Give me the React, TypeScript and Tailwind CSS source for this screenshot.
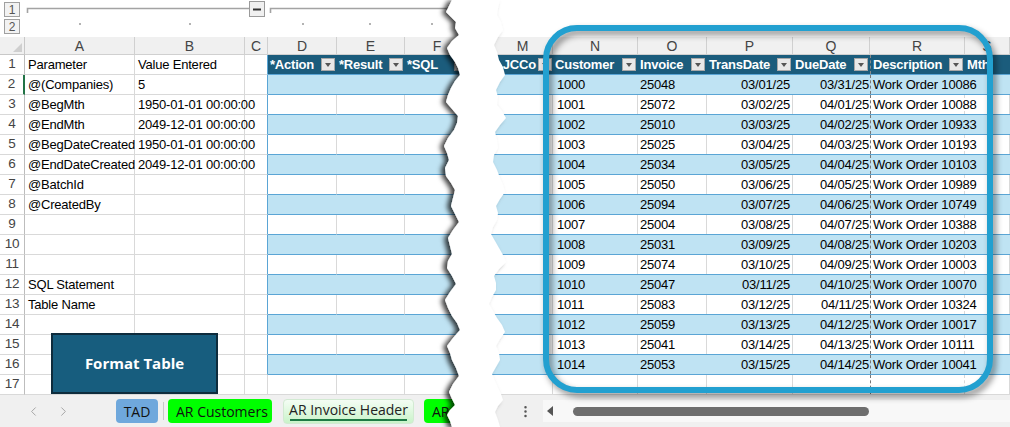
import { ChevronLeft, ChevronRight, EllipsisVertical } from 'lucide-react';

const params: Record<number, string> = {
  1: 'Parameter',
  2: '@(Companies)',
  3: '@BegMth',
  4: '@EndMth',
  5: '@BegDateCreated',
  6: '@EndDateCreated',
  7: '@BatchId',
  8: '@CreatedBy',
  12: 'SQL Statement',
  13: 'Table Name',
};

const values: Record<number, string> = {
  1: 'Value Entered',
  2: '5',
  3: '1950-01-01 00:00:00',
  4: '2049-12-01 00:00:00',
  5: '1950-01-01 00:00:00',
  6: '2049-12-01 00:00:00',
};

const invoices: [string, string, string][] = [
  ['1000', '25048', '10086'],
  ['1001', '25072', '10088'],
  ['1002', '25010', '10933'],
  ['1003', '25025', '10193'],
  ['1004', '25034', '10103'],
  ['1005', '25050', '10989'],
  ['1006', '25094', '10749'],
  ['1007', '25004', '10388'],
  ['1008', '25031', '10203'],
  ['1009', '25074', '10003'],
  ['1010', '25047', '10070'],
  ['1011', '25083', '10324'],
  ['1012', '25059', '10017'],
  ['1013', '25041', '10111'],
  ['1014', '25053', '10041'],
];

const rows = Array.from({ length: 17 }, (_, i) => i + 1);

const HEAD = 'bg-[#1b5c7c]';
const BAND = 'bg-[#bfe3f3]';

function Drop() {
  return (
    <span className="shrink-0 w-[14px] h-[13px] bg-[#e8e8e8] border border-[#a8a8a8] flex items-center justify-center">
      <span className="border-x-[3.5px] border-x-transparent border-t-[4px] border-t-[#555]" />
    </span>
  );
}

function HeadCell({ label, w }: { label: string; w: string }) {
  return (
    <div className={`${w} shrink-0 h-full flex items-center justify-between pl-[2px] pr-[2px] text-white font-bold overflow-hidden`}>
      <span className="whitespace-nowrap">{label}</span>
      <Drop />
    </div>
  );
}

function LeftRow({ n }: { n: number }) {
  const inTable = n >= 2 && n <= 16;
  const band = inTable && n % 2 === 0;
  const cell = 'shrink-0 h-full border-r border-b border-[#d9d9d9] pl-[3px] flex items-center whitespace-nowrap';
  const tCell = band
    ? `shrink-0 h-full ${BAND} border-b border-b-[#5aa5d5]`
    : inTable
      ? 'shrink-0 h-full border-r border-r-[#d9d9d9] border-b border-b-[#5aa5d5]'
      : 'shrink-0 h-full border-r border-b border-[#d9d9d9]';

  return (
    <div className="flex h-[20px]">
      <div
        className={`w-[25px] shrink-0 h-full border-b border-b-[#d9d9d9] flex items-center justify-center text-[13.5px] text-[#444] ${
          n === 2 ? 'border-r-2 border-r-[#217346]' : 'border-r border-r-[#bdbdbd]'
        }`}
      >
        {n}
      </div>
      <div className={`${cell} w-[110px]`}>{params[n]}</div>
      <div className={`${cell} w-[110px]`}>{values[n]}</div>
      <div
        className={`shrink-0 h-full w-[23px] border-b border-b-[#d9d9d9] border-r ${
          n <= 16 ? 'border-r-[#5aa5d5]' : 'border-r-[#d9d9d9]'
        }`}
      />
      {n === 1 ? (
        <div className={`flex h-full ${HEAD} border-b border-b-[#5aa5d5]`}>
          <HeadCell label="*Action" w="w-[69px]" />
          <HeadCell label="*Result" w="w-[68px]" />
          <HeadCell label="*SQL" w="w-[65px]" />
        </div>
      ) : (
        <>
          <div className={`${tCell} w-[69px]`} />
          <div className={`${tCell} w-[68px]`} />
          <div className={`${tCell} w-[65px]`} />
        </>
      )}
    </div>
  );
}

function RightRow({ n }: { n: number }) {
  const inTable = n >= 2 && n <= 16;
  const band = inTable && n % 2 === 0;
  const inv = inTable ? invoices[n - 2] : null;
  const i = n - 2;
  const trans = inv ? `03/${String(i + 1).padStart(2, '0')}/25` : '';
  const due = inv ? (i === 0 ? '03/31/25' : `04/${String(i).padStart(2, '0')}/25`) : '';
  const line = band || n === 1 ? 'border-r border-r-transparent' : 'border-r border-r-[#d9d9d9]';
  const base = `shrink-0 h-full flex items-center whitespace-nowrap ${line}`;
  const rowCls =
    n === 1
      ? `${HEAD} border-b border-b-[#5aa5d5]`
      : inTable
        ? `${band ? BAND : ''} border-b border-b-[#5aa5d5]`
        : 'border-b border-b-[#d9d9d9]';

  if (n === 1) {
    return (
      <div className={`flex h-[20px] ${rowCls}`}>
        <div className="w-[68px] shrink-0 h-full flex items-center justify-end pr-[1px] text-white font-bold">
          <span className="mr-[2px]">JCCo</span>
          <Drop />
        </div>
        <HeadCell label="Customer" w="w-[85px]" />
        <HeadCell label="Invoice" w="w-[69px]" />
        <HeadCell label="TransDate" w="w-[86px]" />
        <HeadCell label="DueDate" w="w-[77px]" />
        <div className="w-[95px] shrink-0 h-full flex items-center justify-between pl-[2px] pr-[2px] text-white font-bold border-l border-dashed border-l-[#8a8a8a]">
          <span>Description</span>
          <Drop />
        </div>
        <div className="w-[45px] shrink-0 h-full flex items-center pl-[2px] text-white font-bold">Mth</div>
      </div>
    );
  }

  return (
    <div className={`flex h-[20px] ${rowCls}`}>
      <div className={`${base} w-[68px]`} />
      <div className={`${base} w-[85px] pl-[4px]`}>{inv?.[0]}</div>
      <div className={`${base} w-[69px] pl-[2px]`}>{inv?.[1]}</div>
      <div className={`${base} w-[86px] justify-end pr-[2px]`}>{trans}</div>
      <div className="shrink-0 h-full w-[77px] flex items-center justify-end pr-[1px]">{due}</div>
      <div
        className={`shrink-0 h-full w-[95px] flex items-center pl-[2px] whitespace-nowrap overflow-visible border-l border-dashed border-l-[#777] ${line}`}
      >
        {inv ? `Work Order ${inv[2]}` : ''}
      </div>
      <div className={`shrink-0 h-full w-[45px] ${line}`} />
    </div>
  );
}

// torn paper seam, left and right edges (page coordinates)
const tearLeft = [
  [452, 0], [449, 6], [446, 12], [451, 17], [456, 22], [455, 28], [459, 35], [452, 41], [447, 48],
  [450, 55], [455, 62], [458, 68], [460, 75], [455, 81], [451, 88], [448, 95], [446, 102],
  [452, 109], [458, 116], [457, 123], [454, 130], [448, 138], [444, 146], [447, 153],
  [449, 160], [445, 168], [446, 176], [451, 183], [455, 190], [453, 198], [451, 206],
  [455, 214], [459, 222], [453, 230], [448, 238], [450, 246], [452, 254], [448, 261],
  [447, 268], [452, 276], [456, 284], [450, 292], [445, 300], [448, 308], [452, 316],
  [457, 323], [460, 330], [453, 338], [447, 346], [450, 353], [452, 360], [456, 368],
  [459, 376], [453, 384], [449, 392], [452, 399], [455, 405], [450, 410], [447, 415],
  [450, 421], [452, 427],
];
const tearRight = [
  [500, 0], [498, 8], [497, 15], [501, 22], [503, 30], [498, 37], [494, 45], [497, 52],
  [499, 60], [503, 67], [505, 75], [500, 82], [496, 90], [498, 97], [497, 105], [502, 111],
  [506, 118], [500, 125], [495, 132], [497, 140], [498, 148], [494, 155], [493, 162],
  [497, 170], [500, 178], [503, 185], [505, 192], [500, 199], [496, 206], [498, 213],
  [497, 220], [493, 227], [491, 234], [495, 241], [499, 248], [503, 255], [506, 262],
  [499, 269], [494, 276], [496, 283], [496, 290], [492, 297], [489, 304], [493, 311],
  [497, 318], [502, 325], [505, 332], [500, 339], [496, 346], [499, 353], [500, 360],
  [496, 367], [492, 374], [495, 381], [498, 388], [501, 394], [503, 400], [498, 406],
  [495, 412], [498, 420], [500, 427],
];
const tearPoints = [...tearLeft, ...[...tearRight].reverse()]
  .map(([x, y]) => `${x - 430},${y}`)
  .join(' ');

export default function App() {
  return (
    <div className="relative w-[1010px] h-[427px] overflow-hidden bg-white text-[13px] tracking-[-0.2px] text-black font-['Liberation_Sans',Arial,sans-serif]">
      <div className="flex h-[395px]">
        {/* left sheet */}
        <div className="w-[470px] shrink-0">
          <div className="flex h-[37px]">
            <div className="w-[25px] shrink-0 flex flex-col gap-[2px] pl-[4px] pt-[2px]">
              <span className="w-[16px] h-[15px] border border-[#a0a0a0] bg-[#f2f2f2] text-[12px] leading-none text-[#555] flex items-center justify-center">1</span>
              <span className="w-[16px] h-[15px] border border-[#a0a0a0] bg-[#f2f2f2] text-[12px] leading-none text-[#555] flex items-center justify-center">2</span>
            </div>
            <svg width="445" height="37" viewBox="0 0 445 37">
              <path d="M2.5 13 V8.5 H224" stroke="#a3a3a3" strokeWidth="1.6" fill="none" />
              <rect x="224.5" y="1.5" width="15" height="15" fill="#f0f0f0" stroke="#9a9a9a" />
              <line x1="228" y1="9.5" x2="236" y2="9.5" stroke="#333" strokeWidth="2" />
              <path d="M245.5 13 V8.5 H425" stroke="#a3a3a3" strokeWidth="1.6" fill="none" />
              {[55, 165, 278, 345, 407].map((x) => (
                <circle key={x} cx={x} cy={24} r={1} fill="#9a9a9a" />
              ))}
            </svg>
          </div>
          <div className="flex h-[18px] bg-[#f0f0f0] text-[14px] tracking-normal text-[#444]">
            <div className="w-[25px] shrink-0 h-full border-r border-b border-[#c8c8c8] flex items-end justify-end pr-[2px] pb-[2px]">
              <span className="border-l-[9px] border-l-transparent border-b-[9px] border-b-[#cfcfcf]" />
            </div>
            {[
              ['A', 'w-[110px]'],
              ['B', 'w-[110px]'],
              ['C', 'w-[23px]'],
              ['D', 'w-[69px]'],
              ['E', 'w-[68px]'],
              ['F', 'w-[65px]'],
            ].map(([l, w]) => (
              <div key={l} className={`${w} shrink-0 h-full border-r border-b border-[#d0d0d0] flex items-center justify-center leading-none`}>
                {l}
              </div>
            ))}
          </div>
          {rows.map((n) => (
            <LeftRow key={n} n={n} />
          ))}
        </div>

        <div className="w-[15px] shrink-0" />

        {/* right sheet */}
        <div className="w-[525px] shrink-0">
          <div className="h-[37px]" />
          <div className="flex h-[18px] bg-[#f0f0f0] text-[14px] tracking-normal text-[#444]">
            {[
              ['M', 'w-[68px] pl-[8px]'],
              ['N', 'w-[85px]'],
              ['O', 'w-[69px]'],
              ['P', 'w-[86px]'],
              ['Q', 'w-[77px]'],
              ['R', 'w-[95px]'],
              ['S', 'w-[45px]'],
            ].map(([l, w]) => (
              <div key={l} className={`${w} shrink-0 h-full border-r border-b border-[#d0d0d0] flex items-center justify-center leading-none`}>
                {l}
              </div>
            ))}
          </div>
          {rows.map((n) => (
            <RightRow key={n} n={n} />
          ))}
        </div>
      </div>

      {/* sheet tabs */}
      <div className="flex h-[32px] bg-[#f0f0f0] items-center tracking-normal font-['Open_Sans',sans-serif] text-[14px]">
        <div className="w-[485px] shrink-0 flex items-center">
          <div className="pl-[18px] flex text-[#a0a0a0]">
            <span className="w-[30px] flex justify-center"><ChevronLeft size={15} strokeWidth={1.5} /></span>
            <span className="w-[30px] flex justify-center"><ChevronRight size={15} strokeWidth={1.5} /></span>
          </div>
          <div className="ml-[38px] w-[42px] h-[24px] rounded-[4px] bg-[#6fa8dc] flex items-center justify-center text-[#111]">TAD</div>
          <div className="ml-[5px] w-px h-[18px] bg-[#c8c8c8]" />
          <div className="ml-[4px] w-[104px] h-[24px] rounded-[4px] bg-[#00ff00] flex items-center pl-[8px] text-[#111] whitespace-nowrap">AR Customers</div>
          <div className="ml-[11px] w-[131px] h-[25px] rounded-[4px] border border-[#d2ead2] bg-gradient-to-b from-[#f4fdf4] to-[#c9f3c9] flex flex-col items-center justify-center text-[#222] whitespace-nowrap">
            <span className="leading-[18px]">AR Invoice Header</span>
            <span className="w-[117px] h-[2px] bg-[#1e7a45]" />
          </div>
          <div className="ml-[10px] w-[60px] h-[24px] rounded-[4px] bg-[#00ff00] flex items-center pl-[8px] text-[#111] whitespace-nowrap">AR</div>
        </div>
        <div className="flex-1 flex items-center">
          <span className="ml-[30px] w-[20px] flex justify-center text-[#555]">
            <EllipsisVertical size={15} strokeWidth={2} />
          </span>
          <div className="ml-[8px] flex-1 h-[22px] bg-[#f8f8f8] flex items-center">
            <span className="ml-[4px] border-y-[5px] border-y-transparent border-r-[6px] border-r-[#555]" />
            <span className="ml-[20px] w-[296px] h-[9px] rounded-full bg-[#6e6e6e]" />
          </div>
        </div>
      </div>

      {/* format table shape */}
      <div className="absolute left-[51px] top-[333px] w-[167px] h-[61px] bg-[#175d7e] border-2 border-[#0e2c3d] flex items-center justify-center text-white font-bold text-[15px] tracking-normal font-['Open_Sans',sans-serif]">
        Format Table
      </div>

      {/* highlight callout */}
      <div className="absolute left-[543px] top-[25px] w-[450px] h-[368px] rounded-[34px] border-[6px] border-[#22a0d0] drop-shadow-[3px_4px_3px_rgba(0,0,0,0.45)]" />

      {/* torn edge */}
      <svg className="absolute left-[430px] top-0" width="85" height="427" viewBox="0 0 85 427">
        <defs>
          <filter id="tear" x="-50%" y="-5%" width="200%" height="110%">
            <feDropShadow dx="-4" dy="1" stdDeviation="2.6" floodColor="#000" floodOpacity="0.75" />
          </filter>
        </defs>
        <polygon points={tearPoints} fill="#fff" filter="url(#tear)" />
      </svg>
    </div>
  );
}
